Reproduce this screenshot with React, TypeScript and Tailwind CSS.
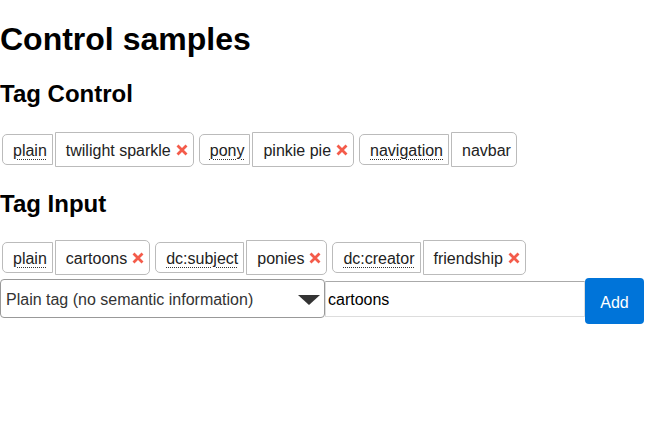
import React from 'react';

type Tag = { label: string; value: string; removable: boolean };

const controlTags: Tag[] = [
  { label: 'plain', value: 'twilight sparkle', removable: true },
  { label: 'pony', value: 'pinkie pie', removable: true },
  { label: 'navigation', value: 'navbar', removable: false },
];

const inputTags: Tag[] = [
  { label: 'plain', value: 'cartoons', removable: true },
  { label: 'dc:subject', value: 'ponies', removable: true },
  { label: 'dc:creator', value: 'friendship', removable: true },
];

const RemoveIcon = () => (
  <svg width="12" height="12" viewBox="0 0 12 12" className="shrink-0">
    <path d="M1.5 1.5 L10.5 10.5 M10.5 1.5 L1.5 10.5" stroke="#f45b4a" strokeWidth="2.8" strokeLinecap="butt" />
  </svg>
);

const TagItem = ({ tag }: { tag: Tag }) => (
  <div className="flex items-center gap-[2px]">
    <span className="flex h-[31px] items-center rounded-l-[5px] border border-[#bbb] pl-[10px] pr-[5px] pt-[3px] leading-[18px]">
      <abbr className="underline decoration-dotted decoration-1 decoration-[#333] underline-offset-[3px]">{tag.label}</abbr>
    </span>
    <span className="flex h-[35px] items-center gap-[5px] rounded-r-[5px] border border-[#bbb] pl-[10px] pr-[5px] pt-[3px] leading-[18px]">
      <span>{tag.value}</span>
      {tag.removable && (
        <span className="-mt-[3px]">
          <RemoveIcon />
        </span>
      )}
    </span>
  </div>
);

const TagRow = ({ tags }: { tags: Tag[] }) => (
  <div className="ml-[2px] flex items-center gap-[5px]">
    {tags.map((t) => (
      <TagItem key={t.label + t.value} tag={t} />
    ))}
  </div>
);

export default function App() {
  return (
    <div className="min-h-[448px] bg-white text-[16px] text-[#222]" style={{ fontFamily: '"Liberation Sans", Arial, sans-serif' }}>
      <h1 className="mt-[21px] text-[32px] font-bold leading-[37px] text-black">Control samples</h1>
      <h2 className="mt-[22px] text-[24px] font-bold leading-[28px] text-black">Tag Control</h2>
      <div className="mt-[24px]">
        <TagRow tags={controlTags} />
      </div>
      <h2 className="mt-[23px] text-[24px] font-bold leading-[28px] text-black">Tag Input</h2>
      <div className="mt-[22px]">
        <TagRow tags={inputTags} />
      </div>
      <div className="mt-[3px] flex items-start">
        <div className="relative mt-[1px] h-[39px] w-[325px] shrink-0">
          <select
            defaultValue="plain"
            className="h-full w-full appearance-none rounded-[4px] border border-[#999] bg-white pl-[5px] pt-[2px] text-[16px] text-[#333] outline-none"
          >
            <option value="plain">Plain tag (no semantic information)</option>
            <option value="dc:subject">dc:subject</option>
            <option value="dc:creator">dc:creator</option>
          </select>
          <svg width="22" height="10" viewBox="0 0 22 10" className="pointer-events-none absolute left-[298px] top-[16px]">
            <path d="M0 0 H22 L11 10 Z" fill="#333" />
          </svg>
        </div>
        <input
          defaultValue="cartoons"
          className="mt-[3px] h-[36px] w-[260px] shrink-0 border border-[#ddd] border-t-[#aaa] bg-white pl-[2px] pt-[1px] text-[16px] text-black outline-none"
        />
        <button className="h-[46px] w-[59px] shrink-0 rounded-[4px] bg-[#0074d9] pt-[3px] text-[16px] text-white">Add</button>
      </div>
    </div>
  );
}
